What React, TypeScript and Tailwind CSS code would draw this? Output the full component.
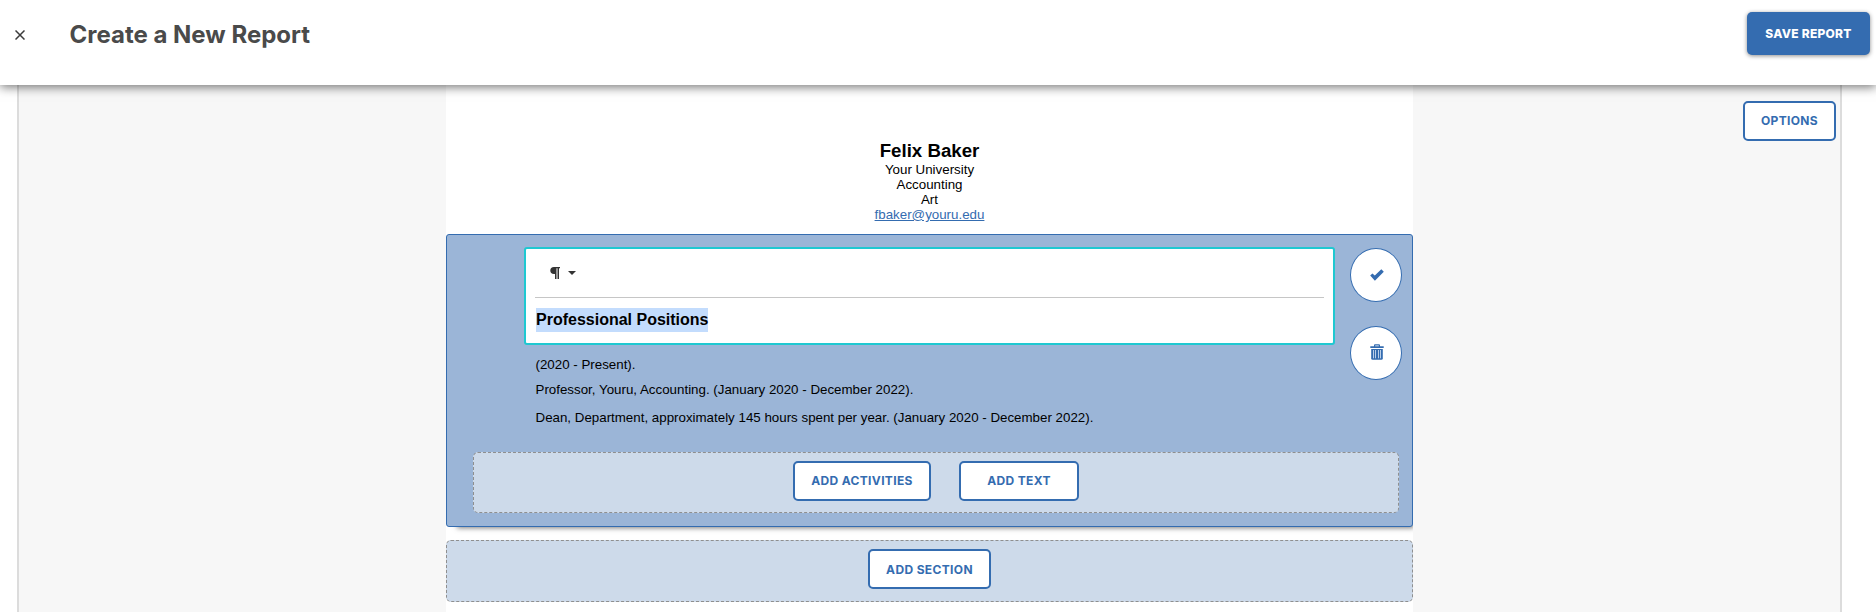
import { useState } from "react";

const ACTIVITIES = [
  { text: "(2020 - Present).", className: "mt-[12px]" },
  {
    text: "Professor, Youru, Accounting. (January 2020 - December 2022).",
    className: "mt-[10px]",
  },
  {
    text: "Dean, Department, approximately 145 hours spent per year. (January 2020 - December 2022).",
    className: "mt-[13px]",
  },
];

function OutlineButton({ label, className }: { label: string; className: string }) {
  return (
    <button
      className={`h-[40px] shrink-0 rounded-[5px] border-2 border-[#346cb0] bg-white font-['Inter',sans-serif] text-[12px] font-bold tracking-[0.35px] whitespace-nowrap text-[#346cb0] ${className}`}
    >
      {label}
    </button>
  );
}

function CheckIcon() {
  return (
    <svg viewBox="0 0 14 12" className="mb-px ml-px h-[12px] w-[14px]" fill="currentColor">
      <path d="M0.2 6.5 2.4 4.4 4.8 6.4 11.3 0.2 13.8 2.7 4.9 11.8Z" />
    </svg>
  );
}

function TrashIcon() {
  return (
    <svg viewBox="0 0 14 16" className="mb-[3px] ml-px h-[16px] w-[14px]" fill="currentColor">
      <path d="M0.3 4V2.2H4V1.2Q4 0.2 5 0.2H9Q10 0.2 10 1.2V2.2H13.7V4ZM5.2 2.2H8.8V1.4H5.2Z" fillRule="evenodd" />
      <path d="M1.2 5H12.8V14.2Q12.8 15.7 11.3 15.7H2.7Q1.2 15.7 1.2 14.2Z" />
      <path d="M3.5 6V14.3M5.5 6V14.3M8.5 6V14.3M10.5 6V14.3" stroke="#b9cee8" strokeWidth="1" />
    </svg>
  );
}

export default function App() {
  const [heading] = useState("Professional Positions");

  return (
    <div className="flex h-[612px] w-[1876px] flex-col overflow-hidden bg-white font-['Liberation_Sans',Arial,sans-serif] text-[13.33px] leading-[15px] text-black">
      {/* Header */}
      <header className="relative z-10 flex h-[85px] shrink-0 items-start bg-white pr-[6px] shadow-[0_2px_10px_rgba(0,0,0,0.55)]">
        <button className="mt-[30px] ml-[14.5px] text-[#3c3c3c]">
          <svg viewBox="0 0 10 10" className="size-[10px]" stroke="currentColor" strokeWidth="1.5">
            <path d="M0.5 0.5 9.5 9.5M9.5 0.5 0.5 9.5" />
          </svg>
        </button>
        <h1 className="mt-[17px] ml-[45px] font-['Inter',sans-serif] text-[24px] leading-[36px] font-bold text-[#4a4a4a]">
          Create a New Report
        </h1>
        <button className="mt-[12px] ml-auto h-[43px] w-[123px] rounded-[5px] bg-[#346cb0] font-['Inter',sans-serif] text-[12px] font-extrabold tracking-[0.25px] text-white shadow-[0_1px_4px_rgba(0,0,0,0.45)]">
          SAVE REPORT
        </button>
      </header>

      {/* Canvas */}
      <main className="ml-[17px] flex w-[1825px] flex-1 border-x-2 border-[#dcdcdc] bg-[#f7f7f7]">
        <div className="ml-[427px] flex w-[967px] shrink-0 flex-col overflow-hidden bg-white">
          {/* Person */}
          <div className="flex h-[149px] shrink-0 flex-col items-center pt-[54px]">
            <h2 className="text-[18.67px] leading-[23px] font-bold">Felix Baker</h2>
            <p>Your University</p>
            <p>Accounting</p>
            <p>Art</p>
            <a className="text-[#346cb0] underline">fbaker@youru.edu</a>
          </div>

          {/* Active section */}
          <section className="flex h-[293px] shrink-0 flex-col rounded-[3px] border border-[#346cb0] bg-[#9bb5d7] shadow-[6px_6px_5px_-5px_rgba(0,0,0,0.5)]">
            <div className="flex h-[217px] shrink-0">
              <div className="ml-[77px] w-[811px] pt-[12px]">
                <div className="h-[98px] rounded-[3px] border-2 border-[#1fc8d1] bg-white px-[9px]">
                  <div className="flex h-[49px] items-center border-b border-[#c6c6c6] pl-[15px]">
                    <svg viewBox="0 0 10 12" className="mb-px h-[12px] w-[10px]" fill="#333">
                      <path d="M4 0H10V1.2H9V12H7.5V1.2H6.5V12H5V7H4Q0.3 6.8 0.3 3.5T4 0Z" />
                    </svg>
                    <svg viewBox="0 0 8 4" className="ml-[8px] h-[4px] w-[8px]" fill="#333">
                      <path d="M0 0H8L4 4Z" />
                    </svg>
                  </div>
                  <h3 className="mt-[10px] ml-px w-fit bg-[#c3dcfd] text-[16px] leading-[24px] font-bold">
                    {heading}
                  </h3>
                </div>
                <div className="pl-[11.5px]">
                  {ACTIVITIES.map((activity) => (
                    <p key={activity.text} className={activity.className}>
                      {activity.text}
                    </p>
                  ))}
                </div>
              </div>
              <div className="mt-[13px] ml-[15px] flex flex-col gap-[24px] text-[#346cb0]">
                <button className="flex h-[54px] w-[52px] items-center justify-center rounded-[50%] border border-[#346cb0] bg-white">
                  <CheckIcon />
                </button>
                <button className="flex h-[54px] w-[52px] items-center justify-center rounded-[50%] border border-[#346cb0] bg-white">
                  <TrashIcon />
                </button>
              </div>
            </div>
            <div className="ml-[26px] flex h-[61px] w-[926px] gap-[28px] rounded-[5px] border border-dashed border-[#8f8f8f] bg-[#cddaea] pt-[8px] pl-[319px]">
              <OutlineButton label="ADD ACTIVITIES" className="w-[138px] pb-px" />
              <OutlineButton label="ADD TEXT" className="w-[120px] pb-px" />
            </div>
          </section>

          <div className="mt-[13px] flex h-[62px] shrink-0 justify-center rounded-[5px] border border-dashed border-[#8f8f8f] bg-[#cddaea] pt-[8px]">
            <OutlineButton label="ADD SECTION" className="w-[123px] pt-px" />
          </div>
        </div>

        <div className="mt-[16px] mr-[4px] ml-auto">
          <OutlineButton label="OPTIONS" className="w-[93px] pb-px" />
        </div>
      </main>
    </div>
  );
}
